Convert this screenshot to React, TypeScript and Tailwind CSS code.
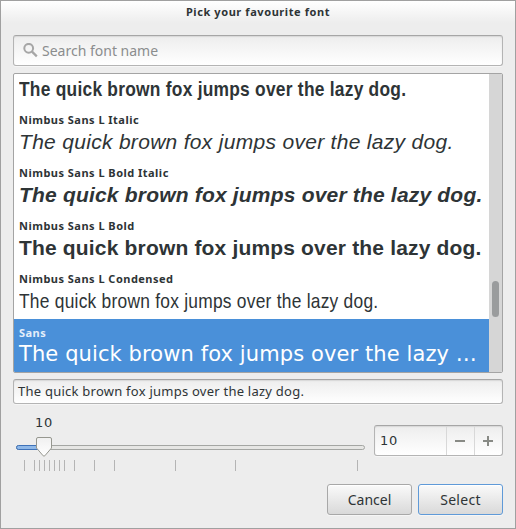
import React from "react";

const SAMPLE = "The quick brown fox jumps over the lazy dog.";

type Row = { name?: string; text?: string; font: string; fit?: string; selected?: boolean };

const rows: Row[] = [
  { font: "font-['Liberation_Sans',sans-serif] font-bold text-[21px] tracking-[0.3px]", fit: "origin-left scale-x-[0.827]" },
  { name: "Nimbus Sans L Italic", font: "font-['Liberation_Sans',sans-serif] italic text-[21px] tracking-[0.3px]" },
  { name: "Nimbus Sans L Bold Italic", font: "font-['Liberation_Sans',sans-serif] italic font-bold text-[21px] tracking-[0.19px]" },
  { name: "Nimbus Sans L Bold", font: "font-['Liberation_Sans',sans-serif] font-bold text-[21px] tracking-[0.17px]" },
  { name: "Nimbus Sans L Condensed", font: "font-['Liberation_Sans',sans-serif] text-[21px] tracking-[0.3px]", fit: "origin-left scale-x-[0.827]" },
  { name: "Sans", text: "The quick brown fox jumps over the lazy …", font: "font-['DejaVu_Sans',sans-serif] text-[21px] tracking-[0.1px]", selected: true },
];

const ticks = [8, 18, 23, 28, 33, 38, 43, 48, 58, 78, 98, 159, 219, 341];

function FontRow({ row }: { row: Row }) {
  return (
    <div className={`flex shrink-0 flex-col whitespace-nowrap pl-[5px] pb-[5px] ${row.name ? "h-[53px]" : "h-[33px]"} ${row.selected ? "bg-[#4a90d9] pt-[6px] text-white" : row.name ? "pt-[5px] text-[#2e3436]" : "pt-[2px] text-[#2e3436]"}`}>
      {row.name && (
        <div className={`h-4 text-[11px] font-bold leading-4 tracking-[0.48px] ${row.selected ? "text-[#e4eefa]" : ""}`}>{row.name}</div>
      )}
      <div className={`mt-auto h-[26px] leading-[26px] ${row.font}`}>
        <span className={`inline-block ${row.fit ?? ""}`}>{row.text ?? SAMPLE}</span>
      </div>
    </div>
  );
}

const entry = "rounded-[3px] border border-[#b4b4b4] border-t-[#a6a6a6] bg-linear-to-b from-[#ededed] to-white shadow-[inset_0_1px_1px_#d8d8d8,0_1px_0_#f6f6f6]";
const button = "flex h-[31px] items-center justify-center rounded-[3px] border bg-linear-to-b from-[#fafafa] to-[#d9d9d9] shadow-[inset_0_1px_0_#ffffff,0_1px_0_#f6f6f6]";

export default function App() {
  return (
    <div className="flex h-[529px] w-[516px] flex-col overflow-hidden border border-[#a0a0a0] bg-[#ededed] px-3 font-['Noto_Sans','Open_Sans',sans-serif] text-[13px] text-[#2e3436]">
      <div className="-mx-3 flex h-[22px] shrink-0 items-center justify-center bg-linear-to-b from-white to-[#ededed] text-[11px] font-bold tracking-[0.58px]">
        <span>Pick your favourite font</span>
      </div>

      <div className={`mt-3 flex h-[31px] w-[490px] shrink-0 items-center pl-[9px] text-[#8b8d8e] ${entry}`}>
        <svg width="16" height="16" viewBox="0 0 16 16" fill="none" stroke="#a6a6a6">
          <circle cx="5.7" cy="5.3" r="4.4" strokeWidth="2" />
          <path d="M9 8.7l4.8 4.6" strokeWidth="2.3" />
        </svg>
        <span className="ml-[3px] pb-px text-[14px]">Search font name</span>
      </div>

      <div className="mt-[7px] flex h-[300px] w-[490px] shrink-0 overflow-hidden rounded-[2px] border border-[#a4a4a4] bg-white">
        <div className="flex w-[475px] flex-col justify-end overflow-hidden">
          {rows.map((row, i) => (
            <FontRow key={i} row={row} />
          ))}
        </div>
        <div className="w-[13px] bg-[#d6d6d6] pl-[3px] pt-[207px]">
          <div className="h-9 w-[7px] rounded-full bg-[#9a9c9d]" />
        </div>
      </div>

      <div className={`mt-[6px] flex h-[25px] w-[490px] shrink-0 items-center pl-1 ${entry}`}>
        <span className="tracking-[0.24px]">{SAMPLE}</span>
      </div>

      <div className="mt-2 flex h-[60px] shrink-0">
        <div className="ml-[3px] w-[349px]">
          <div className="h-[25px] pl-[19px] font-['DejaVu_Sans',sans-serif] text-[13px] leading-[22px] tracking-[0.8px]">10</div>
          <div className="relative mt-[8px] h-[5px] rounded-full border border-[#a4a6a3] bg-[#e6e6e4]">
            <div className="absolute -left-px -top-px h-[5px] w-7 rounded-l-full border border-[#3f72b8] bg-[#8fb8e8]" />
            <svg className="absolute left-[18px] -top-[10px]" width="18" height="22" viewBox="0 0 18 22">
              <defs>
                <linearGradient id="knob" x1="0" y1="0" x2="0" y2="1">
                  <stop offset="0" stopColor="#f0f0f0" />
                  <stop offset="1" stopColor="#ffffff" />
                </linearGradient>
              </defs>
              <path d="M3 1.5H15Q16.5 1.5 16.5 3V12L9.8 19.8Q9 20.6 8.2 19.8L1.5 12V3Q1.5 1.5 3 1.5Z" fill="url(#knob)" stroke="#96978f" />
            </svg>
          </div>
          <svg className="mt-[10px] block" width="349" height="11" fill="#b4b4b4">
            {ticks.map((x) => (
              <rect key={x} x={x} y="0" width="1" height="11" />
            ))}
          </svg>
        </div>
        <div className={`ml-[9px] mt-[13px] flex h-[31px] w-[129px] items-center ${entry}`}>
          <span className="w-[71px] pl-[5px] pt-px font-['DejaVu_Sans',sans-serif] text-[13px] tracking-[0.8px]">10</span>
          <div className="flex h-full w-7 items-center justify-center border-l border-[#d8d8d8] pr-px">
            <div className="h-[2px] w-[10px] bg-[#888a85]" />
          </div>
          <div className="flex h-full w-7 items-center justify-center border-l border-[#d8d8d8] pr-px">
            <svg width="10" height="10" fill="#888a85">
              <path d="M4 0h2v4h4v2H6v4H4V6H0V4h4z" />
            </svg>
          </div>
        </div>
      </div>

      <div className="mt-[12px] flex w-[490px] shrink-0 justify-end gap-[6px]">
        <div className={`${button} w-[85px] border-[#a8a8a8]`}><span className="pb-px text-[14px]">Cancel</span></div>
        <div className={`${button} w-[85px] border-[#5f9ad8]`}><span className="pb-px text-[14px] tracking-[0.3px]">Select</span></div>
      </div>
    </div>
  );
}
